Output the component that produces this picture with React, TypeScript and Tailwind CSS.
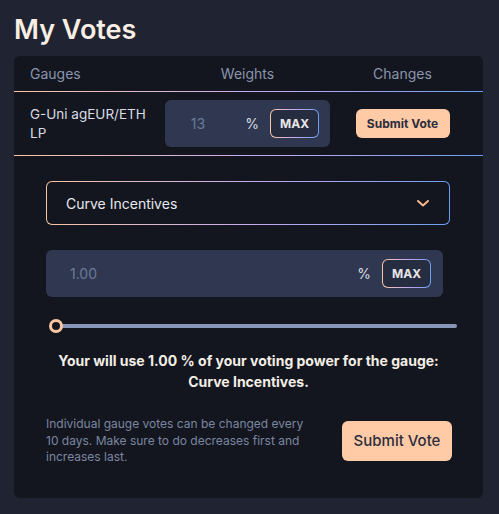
import React, { useState } from 'react'

const grad = 'bg-gradient-to-r from-[#fbc6a0] via-[#c7a9ee] to-[#6a9ff3]'

const MaxBtn = () => (
  <div className={`${grad} rounded-md p-px`}>
    <button className="h-[27px] w-[47px] rounded-[5px] bg-[#262d40] text-[12px] font-bold text-[#e9e6ea]">MAX</button>
  </div>
)

const App = () => {
  const [weight] = useState('13')
  const [amount] = useState('1.00')

  return (
    <div className="min-h-screen bg-[#1f2332] px-[14px] pt-[14px] font-['Inter',sans-serif]">
      <h1 className="mb-[10px] text-[27px] font-semibold leading-[32px] text-[#f8eee3]">My Votes</h1>

      <div className="w-[469px] rounded-md bg-[#13161f] pb-[32px]">
        {/* header */}
        <div className="flex h-[35px] items-center pl-4 pr-2 text-[14px] text-[#8a94ad]">
          <div className="w-[135px]">Gauges</div>
          <div className="w-[165px] text-center">Weights</div>
          <div className="flex-1 text-center">Changes</div>
        </div>
        <div className={`h-px ${grad}`} />

        {/* row */}
        <div className="flex h-[63px] items-center pl-4 pr-2">
          <div className="w-[135px] pr-3 text-[13.5px] leading-[19px] text-[#d9dbe3]">G-Uni agEUR/ETH LP</div>
          <div className="flex h-[47px] w-[165px] items-center rounded-md bg-[#2f3850] pr-[11px]">
            <span className="w-[66px] text-center text-[14px] text-[#6b7a99]">{weight}</span>
            <span className="ml-auto mr-[11px] text-[14px] text-[#d9dbe3]">%</span>
            <MaxBtn />
          </div>
          <div className="flex flex-1 justify-center">
            <button className="h-[29px] w-[94px] rounded-md bg-[#ffcaa6] text-[12px] font-bold text-[#2b2d3b]">Submit Vote</button>
          </div>
        </div>
        <div className={`h-px ${grad}`} />

        {/* expanded */}
        <div className="px-8 pt-[25px]">
          <div className={`${grad} w-[404px] rounded-md p-px`}>
            <div className="flex h-[42px] items-center justify-between rounded-[5px] bg-[#13161f] pl-[19px] pr-[19px]">
              <span className="text-[14px] text-[#e8e8ee]">Curve Incentives</span>
              <svg width="14" height="10" viewBox="0 0 14 10" fill="none">
                <path d="M2 3l5 4.5L12 3" stroke="#f7b98c" strokeWidth="2" strokeLinecap="round" strokeLinejoin="round" />
              </svg>
            </div>
          </div>

          <div className="mt-[25px] flex h-[47px] w-[397px] items-center rounded-md bg-[#2f3850] pl-6 pr-3">
            <span className="text-[14px] text-[#6b7a99]">{amount}</span>
            <span className="ml-auto mr-[11px] text-[14px] text-[#d9dbe3]">%</span>
            <MaxBtn />
          </div>

          <div className="relative mt-[27px] ml-1 h-1 w-[407px] rounded-full bg-[#8796b8]">
            <div className="absolute left-[-1px] top-[-5px] h-[14px] w-[14px] rounded-full border-[3px] border-[#fbc6a0] bg-[#13161f]" />
          </div>

          <p className="mt-[22px] text-center text-[14px] font-bold leading-[21px] text-[#f3eee6]">
            Your will use 1.00 % of your voting power for the gauge:
            <br />
            Curve Incentives.
          </p>

          <div className="mt-[24px] flex items-center">
            <p className="text-[12px] leading-[16.5px] text-[#7c86a0]">
              Individual gauge votes can be changed every
              <br />
              10 days. Make sure to do decreases first and
              <br />
              increases last.
            </p>
            <button className="ml-auto mr-[-1px] h-[40px] w-[110px] rounded-md bg-[#ffcaa6] text-[15px] font-medium text-[#2b2d3b]">Submit Vote</button>
          </div>
        </div>
      </div>
    </div>
  )
}

export default App
